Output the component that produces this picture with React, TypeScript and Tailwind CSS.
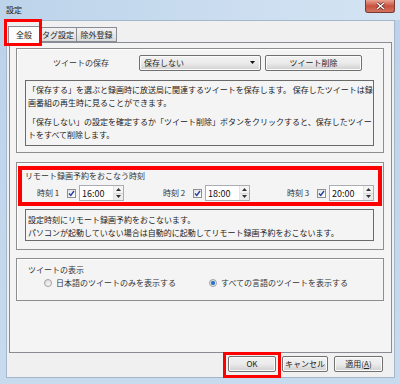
import React from "react";

function Check() {
  return (
    <div className="w-[9px] h-[9px] border border-[#8f8f8f] bg-gradient-to-br from-[#e4e4e4] to-[#ffffff] flex items-center justify-center">
      <svg width="7" height="7" viewBox="0 0 7 7">
        <path d="M1 3.5 L2.8 5.5 L6 1" fill="none" stroke="#21439c" strokeWidth="1.4" />
      </svg>
    </div>
  );
}

function Spin({ value }: { value: string }) {
  return (
    <div className="w-[45px] h-[16px] flex bg-white border border-[#abadb3]">
      <div className="flex-1 flex items-center pl-[2px] text-[9px] text-[#111]">{value}</div>
      <div className="w-[10px] flex flex-col border-l border-[#e3e3e3]">
        <div className="flex-1 flex items-center justify-center bg-[#f4f4f4] border-b border-[#d8d8d8]">
          <svg width="5" height="3" viewBox="0 0 5 3"><path d="M0 3 L2.5 0 L5 3 Z" fill="#333" /></svg>
        </div>
        <div className="flex-1 flex items-center justify-center bg-[#ececec]">
          <svg width="5" height="3" viewBox="0 0 5 3"><path d="M0 0 L2.5 3 L5 0 Z" fill="#333" /></svg>
        </div>
      </div>
    </div>
  );
}

function TimeItem({ label, value, w }: { label: string; value: string; w: string }) {
  return (
    <div className={`flex items-center ${w}`}>
      <div className="w-[30px] text-[#333]">{label}</div>
      <Check />
      <div className="w-[3px]" />
      <Spin value={value} />
    </div>
  );
}

function WinButton({ children, w }: { children: React.ReactNode; w: string }) {
  return (
    <div
      className={`${w} h-[16px] rounded-[2px] border border-[#707070] bg-gradient-to-b from-[#f2f2f2] via-[#ebebeb] to-[#cfcfcf] flex items-center justify-center text-[#222] shadow-[inset_0_0_0_1px_#fbfbfb]`}
    >
      {children}
    </div>
  );
}

function Radio({ on }: { on?: boolean }) {
  return (
    <div className="w-[8px] h-[8px] rounded-full border border-[#a0a0a0] bg-gradient-to-br from-[#dcdcdc] to-[#fafafa] flex items-center justify-center">
      {on && <div className="w-[4px] h-[4px] rounded-full bg-[#2a6fc9] shadow-[0_0_1px_#6fb0f0]" />}
    </div>
  );
}

export default function App() {
  return (
    <div className="relative w-[400px] h-[384px] overflow-hidden bg-gradient-to-b from-[#bad2ea] to-[#c8dbee] font-['Noto_Sans_CJK_JP','Noto_Sans',sans-serif] text-[8px] leading-none text-[#1e1e1e]">
      {/* title bar */}
      <div className="h-[19px] flex items-center pl-[6px] bg-gradient-to-r from-[#bcd3ea] via-[#c9dcef] to-[#d4e4f3] text-[#1a1a1a]">
        設定
      </div>
      <div className="h-px bg-gradient-to-r from-[#bcd3ea] via-[#c9dcef] to-[#d4e4f3]" />
      {/* close button */}
      <div className="absolute top-0 right-[5px] w-[30px] h-[13px] rounded-b-[3px] border border-t-0 border-[#7a3a34] bg-gradient-to-b from-[#e8a493] via-[#c9503f] to-[#d2745e] flex items-center justify-center">
        <svg width="9" height="8" viewBox="0 0 9 8">
          <path d="M1 1 L8 7 M8 1 L1 7" stroke="#4a1a14" strokeWidth="2.6" />
          <path d="M1 1 L8 7 M8 1 L1 7" stroke="#ffffff" strokeWidth="1.5" />
        </svg>
      </div>

      {/* client area */}
      <div className="ml-[6px] w-[389px] h-[358px] bg-[#f0f0f0] border border-[#a5b7cc] flex flex-col">
        {/* tabs */}
        <div className="flex items-end h-[21px] pl-[1px] relative z-10">
          <div className="w-[32px] h-[17px] bg-[#fcfcfc] border border-b-0 border-[#898c95] flex items-center justify-center -mb-px">
            全般
          </div>
          <div className="w-[37px] h-[15px] bg-gradient-to-b from-[#f2f2f2] to-[#dcdcdc] border border-l-0 border-[#898c95] flex items-center justify-center">
            タグ設定
          </div>
          <div className="w-[40px] h-[15px] bg-gradient-to-b from-[#f2f2f2] to-[#dcdcdc] border border-l-0 border-[#898c95] flex items-center justify-center">
            除外登録
          </div>
        </div>

        {/* panel */}
        <div className="ml-[2px] w-[383px] h-[311px] border border-[#898c95] bg-[#f4f4f4] pl-[6px] pt-[5px] flex flex-col">
          {/* group 1 */}
          <div className="w-[368px] h-[105px] border border-[#8e8e8e] shadow-[inset_1px_1px_0_#ffffff] flex flex-col pt-[5px]">
            <div className="flex items-center h-[17px] pl-[36px]">
              <div className="w-[86px] text-[#333]">ツイートの保存</div>
              <div className="w-[122px] h-[16px] rounded-[2px] border border-[#707070] bg-gradient-to-b from-[#f2f2f2] via-[#ebebeb] to-[#d2d2d2] flex items-center pl-[4px] pr-[5px] shadow-[inset_0_0_0_1px_#fbfbfb]">
                <div className="flex-1">保存しない</div>
                <svg width="5" height="3" viewBox="0 0 5 3"><path d="M0 0 L2.5 3 L5 0 Z" fill="#111" /></svg>
              </div>
              <div className="w-[4px]" />
              <WinButton w="w-[97px]">ツイート削除</WinButton>
            </div>
            <div className="ml-[8px] mt-[9px] w-[349px] h-[66px] border border-[#6a6a6a] pl-[2px] pt-[2px] leading-[13px] whitespace-nowrap text-[#222]">
              <div>「保存する」を選ぶと録画時に放送局に関連するツイートを保存します。 保存したツイートは録</div>
              <div>画番組の再生時に見ることができます。</div>
              <div className="h-[6px]" />
              <div>「保存しない」の設定を確定するか「ツイート削除」ボタンをクリックすると、保存したツイー</div>
              <div>トをすべて削除します。</div>
            </div>
          </div>

          {/* group 2 */}
          <div className="mt-[9px] w-[368px] h-[88px] border border-[#8e8e8e] shadow-[inset_1px_1px_0_#ffffff] flex flex-col pt-[3px]">
            <div className="ml-[1px] w-[364px] h-[40px] border-4 border-[#ff0000] flex flex-col">
              <div className="pl-[3px] pt-[2px] h-[12px] text-[#333]">リモート録画予約をおこなう時刻</div>
              <div className="flex items-center h-[16px] mt-[3px] pl-[15px]">
                <TimeItem label="時刻 1" value="16:00" w="w-[126px]" />
                <TimeItem label="時刻 2" value="18:00" w="w-[124px]" />
                <TimeItem label="時刻 3" value="20:00" w="w-[90px]" />
              </div>
            </div>
            <div className="ml-[8px] mt-[3px] w-[349px] h-[32px] border border-[#6a6a6a] pl-[2px] pt-[3px] leading-[13px] whitespace-nowrap text-[#222]">
              <div>設定時刻にリモート録画予約をおこないます。</div>
              <div>パソコンが起動していない場合は自動的に起動してリモート録画予約をおこないます。</div>
            </div>
          </div>

          {/* group 3 */}
          <div className="mt-[8px] w-[368px] h-[43px] border border-[#8e8e8e] shadow-[inset_1px_1px_0_#ffffff] flex flex-col">
            <div className="pl-[11px] pt-[7px] h-[17px] text-[#333]">ツイートの表示</div>
            <div className="flex items-center h-[12px] mt-[1px]">
              <div className="w-[27px]" />
              <Radio />
              <div className="w-[157px] pl-[4px] text-[#333]">日本語のツイートのみを表示する</div>
              <Radio on />
              <div className="pl-[4px] text-[#333]">すべての言語のツイートを表示する</div>
            </div>
          </div>
        </div>

        {/* bottom buttons */}
        <div className="flex justify-end gap-[6px] pr-[11px] mt-[3px]">
          <WinButton w="w-[48px]">OK</WinButton>
          <WinButton w="w-[46px]">キャンセル</WinButton>
          <WinButton w="w-[49px]">適用(<span className="underline">A</span>)</WinButton>
        </div>
      </div>

      {/* annotation boxes */}
      <div className="absolute left-[4px] top-[19px] w-[38px] h-[27px] border-[3px] border-[#ff0000] z-20" />
      <div className="absolute left-[223px] top-[352px] w-[58px] h-[26px] border-[3px] border-[#ff0000] z-20" />
    </div>
  );
}
